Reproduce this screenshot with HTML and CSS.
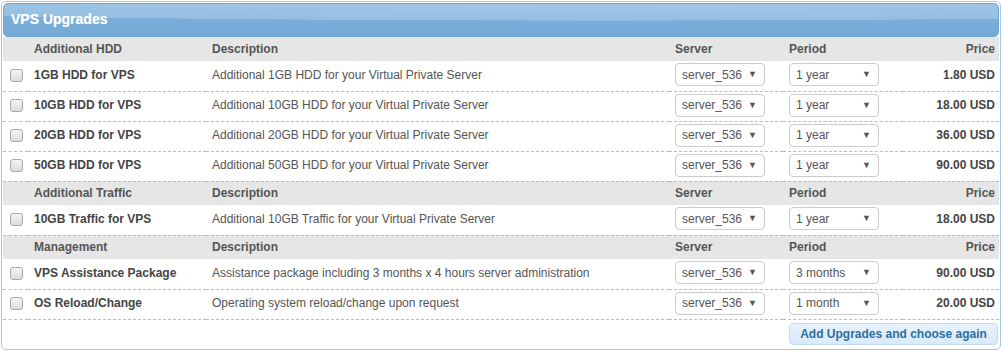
FILE: index.html
```html
<!DOCTYPE html>
<html lang="en">

<head>
  <meta charset="UTF-8">
  <meta name="viewport" content="width=device-width, initial-scale=1.0">
  <title>VPS Upgrades</title>
  <link rel="stylesheet" href="styles.css">
</head>

<body>
  <section class="box">
    <h2 class="box-title">VPS Upgrades</h2>

    <table class="upgrades">
      <colgroup>
        <col class="col-check">
        <col class="col-name">
        <col class="col-desc">
        <col class="col-server">
        <col class="col-period">
        <col class="col-price">
      </colgroup>

      <tr class="group">
        <th></th>
        <th>Additional HDD</th>
        <th>Description</th>
        <th>Server</th>
        <th>Period</th>
        <th class="price">Price</th>
      </tr>
      <tr>
        <td><input type="checkbox" class="check"></td>
        <td class="name">1GB HDD for VPS</td>
        <td>Additional 1GB HDD for your Virtual Private Server</td>
        <td><span class="select server"><select><option>server_536</option></select></span></td>
        <td><span class="select"><select><option>1 year</option></select></span></td>
        <td class="price">1.80 USD</td>
      </tr>
      <tr>
        <td><input type="checkbox" class="check"></td>
        <td class="name">10GB HDD for VPS</td>
        <td>Additional 10GB HDD for your Virtual Private Server</td>
        <td><span class="select server"><select><option>server_536</option></select></span></td>
        <td><span class="select"><select><option>1 year</option></select></span></td>
        <td class="price">18.00 USD</td>
      </tr>
      <tr>
        <td><input type="checkbox" class="check"></td>
        <td class="name">20GB HDD for VPS</td>
        <td>Additional 20GB HDD for your Virtual Private Server</td>
        <td><span class="select server"><select><option>server_536</option></select></span></td>
        <td><span class="select"><select><option>1 year</option></select></span></td>
        <td class="price">36.00 USD</td>
      </tr>
      <tr>
        <td><input type="checkbox" class="check"></td>
        <td class="name">50GB HDD for VPS</td>
        <td>Additional 50GB HDD for your Virtual Private Server</td>
        <td><span class="select server"><select><option>server_536</option></select></span></td>
        <td><span class="select"><select><option>1 year</option></select></span></td>
        <td class="price">90.00 USD</td>
      </tr>

      <tr class="group">
        <th></th>
        <th>Additional Traffic</th>
        <th>Description</th>
        <th>Server</th>
        <th>Period</th>
        <th class="price">Price</th>
      </tr>
      <tr>
        <td><input type="checkbox" class="check"></td>
        <td class="name">10GB Traffic for VPS</td>
        <td>Additional 10GB Traffic for your Virtual Private Server</td>
        <td><span class="select server"><select><option>server_536</option></select></span></td>
        <td><span class="select"><select><option>1 year</option></select></span></td>
        <td class="price">18.00 USD</td>
      </tr>

      <tr class="group">
        <th></th>
        <th>Management</th>
        <th>Description</th>
        <th>Server</th>
        <th>Period</th>
        <th class="price">Price</th>
      </tr>
      <tr>
        <td><input type="checkbox" class="check"></td>
        <td class="name">VPS Assistance Package</td>
        <td>Assistance package including 3 months x 4 hours server administration</td>
        <td><span class="select server"><select><option>server_536</option></select></span></td>
        <td><span class="select"><select><option>3 months</option></select></span></td>
        <td class="price">90.00 USD</td>
      </tr>
      <tr>
        <td><input type="checkbox" class="check"></td>
        <td class="name">OS Reload/Change</td>
        <td>Operating system reload/change upon request</td>
        <td><span class="select server"><select><option>server_536</option></select></span></td>
        <td><span class="select"><select><option>1 month</option></select></span></td>
        <td class="price">20.00 USD</td>
      </tr>
    </table>

    <div class="actions">
      <button class="btn">Add Upgrades and choose again</button>
    </div>
  </section>
</body>

</html>
```

FILE: styles.css
```css
html {
  box-sizing: border-box;
  font-family: 'Liberation Sans', Arial, sans-serif;
  font-size: 12px;
}

*,
*::after,
*::before {
  box-sizing: inherit;
}

body {
  margin: 1px;
  color: #555;
}

.box {
  width: 1000px;
  padding: 1px 1px 4px;
  border: 1px solid #a6c9e2;
  border-radius: 5px;
  background-color: #fff;
}

.box-title {
  margin: 0;
  height: 34px;
  padding: 0 7px;
  line-height: 31px;
  font-size: 14px;
  font-weight: bold;
  color: #fff;
  text-shadow: 0 0 1px rgba(255, 255, 255, .5);
  border: 1px solid #6fa6d6;
  border-radius: 5px;
  background: radial-gradient(ellipse 140% 90% at 60% -10%, #a4c8e7 0%, #95bfe2 68%, transparent 69%),
    linear-gradient(#80b2dc, #74a9d6);
}

.upgrades {
  width: 996px;
  border-collapse: collapse;
  table-layout: fixed;
}

.col-check { width: 25px; }
.col-name { width: 178px; }
.col-desc { width: 463px; }
.col-server { width: 114px; }
.col-period { width: 120px; }

.upgrades th,
.upgrades td {
  padding: 0 6px;
  text-align: left;
  white-space: nowrap;
}

.group th {
  height: 24px;
  background-color: #e6e6e6;
  font-weight: bold;
  color: #555;
}

.upgrades td {
  height: 30px;
  padding-bottom: 2px;
  border-bottom: 1px dashed #bbb;
}

.upgrades td:first-child {
  padding-left: 7px;
  padding-right: 0;
}

.upgrades .price {
  text-align: right;
  padding-right: 4px;
}

td.price,
.name {
  font-weight: bold;
  color: #444;
}

.check {
  appearance: none;
  display: block;
  margin: 1px 0 0;
  width: 13px;
  height: 13px;
  border: 1px solid #a9a9a9;
  border-radius: 3px;
  background: linear-gradient(#f4f4f4, #dcdcdc);
}

.select {
  position: relative;
  display: inline-block;
  vertical-align: middle;
}

.select::after {
  content: "\25BC";
  position: absolute;
  right: 8px;
  top: 6px;
  font-size: 9px;
  color: #555;
  pointer-events: none;
}

.select select {
  appearance: none;
  display: block;
  width: 90px;
  height: 23px;
  margin: 0;
  padding: 0 0 0 6px;
  border: 1px solid #ccc;
  border-radius: 4px;
  background-color: #fff;
  font-family: inherit;
  font-size: 12px;
  color: #555;
}

.actions {
  display: flex;
  justify-content: flex-end;
  padding: 3px 1px 0 0;
}

.btn {
  height: 22px;
  width: 209px;
  padding: 0;
  border: 1px solid #c5dbec;
  border-radius: 4px;
  background: linear-gradient(#e6f2fd, #d8eafa);
  font-family: inherit;
  font-size: 12px;
  font-weight: bold;
  color: #2e6e9e;
}
```
